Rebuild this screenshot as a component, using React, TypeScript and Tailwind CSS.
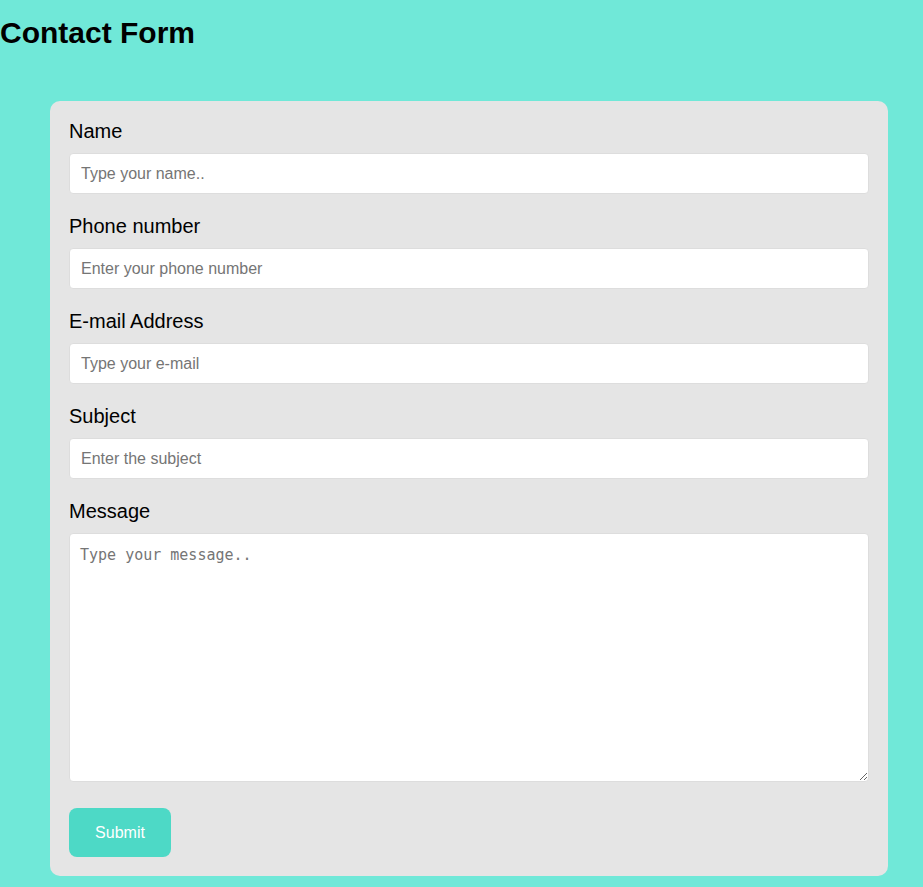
export default function App() {
  const fields = [
    { label: "Name", placeholder: "Type your name.." },
    { label: "Phone number", placeholder: "Enter your phone number" },
    { label: "E-mail Address", placeholder: "Type your e-mail" },
    { label: "Subject", placeholder: "Enter the subject" },
  ]

  return (
    <div className="min-h-screen bg-[#70e8d8] font-['Liberation_Sans',Arial,sans-serif] text-black pt-[15px] pb-[11px]">
      <h1 className="text-[30px] font-bold leading-[35px]">Contact Form</h1>
      <form className="mt-[51px] ml-[50px] w-[838px] rounded-[10px] bg-[#e5e5e5] px-[19px] pt-[17px] pb-[19px]">
        {fields.map((f) => (
          <div key={f.label} className="mb-[19px]">
            <label className="block text-[20px] leading-[23px] pt-[2px] mb-[10px]">{f.label}</label>
            <input
              type="text"
              placeholder={f.placeholder}
              className="block w-full h-[41px] rounded-[4px] border border-[#dddddd] bg-white px-[11px] text-[16px] placeholder:text-[#757575] outline-none"
            />
          </div>
        ))}
        <div>
          <label className="block text-[20px] leading-[23px] pt-[2px] mb-[10px]">Message</label>
          <textarea
            placeholder="Type your message.."
            className="block w-full h-[249px] rounded-[4px] border border-[#dddddd] bg-white px-[10px] py-[10px] font-['DejaVu_Sans_Mono',monospace] text-[15px] placeholder:text-[#757575] outline-none"
          />
        </div>
        <button
          type="button"
          className="mt-[26px] h-[49px] w-[102px] rounded-[8px] bg-[#4dd9c6] text-[16px] text-white"
        >
          Submit
        </button>
      </form>
    </div>
  )
}
